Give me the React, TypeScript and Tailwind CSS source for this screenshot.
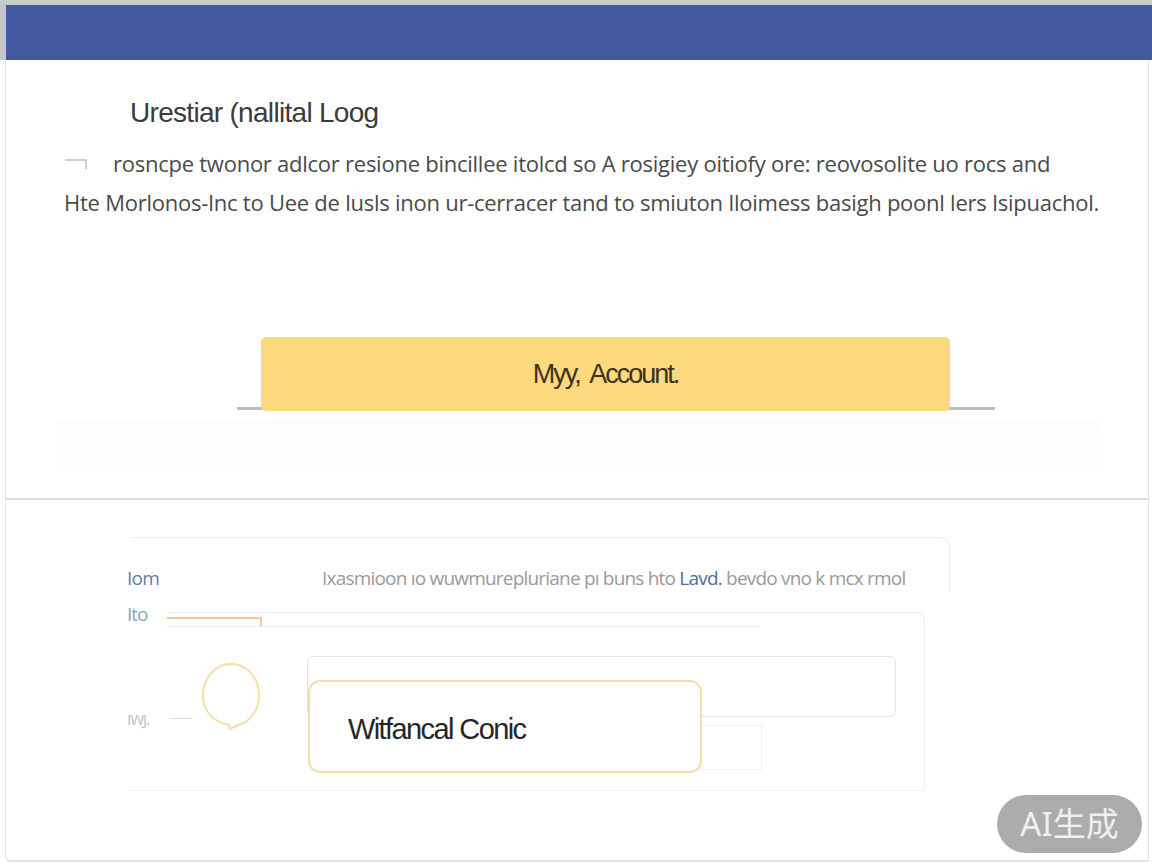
import type { FC } from 'react';

const Header: FC = () => (
    <header className="shrink-0 flex flex-col">
        <div className="h-[5px] bg-[#c7cad0]" />
        <div className="h-[55px] flex">
            <div className="w-[6px] bg-[#c2c5cb]" />
            <div className="flex-1 bg-[#4259a0]" />
        </div>
    </header>
);

const CornerMark: FC = () => (
    // faint bracket glyph in front of the first line
    <svg width="26" height="12" viewBox="0 0 26 12" className="shrink-0">
        <path d="M1 2 H22 V11" fill="none" stroke="#cfcfcf" strokeWidth="2" />
    </svg>
);

const Intro: FC = () => (
    <div className="mt-[14px] text-[22px] leading-[39px] text-[#4a4a4a] font-['Open_Sans',sans-serif] tracking-[-0.25px]">
        <p className="ml-[58px] flex items-center gap-[23px] whitespace-nowrap">
            <CornerMark />
            <span>rosncpe twonor adlcor resione bincillee itolcd so A rosigiey oitiofy ore: reovosolite uo rocs and</span>
        </p>
        <p className="ml-[58px] whitespace-nowrap">Hte Morlonos-Inc to Uee de lusls inon ur-cerracer tand to smiuton Iloimess basigh poonl lers Isipuachol.</p>
    </div>
);

const AccountButton: FC = () => (
    <div className="ml-[231px] mt-[115px] w-[758px] border-b-[3px] border-[#bdbdbd] flex">
        <button className="ml-[24px] -mb-[4px] w-[689px] h-[74px] rounded-[5px] bg-[#fbd97c] text-[27px] text-[#3b3222] tracking-[-2px] font-['Liberation_Sans',sans-serif]">
            Myy,&nbsp; Account.
        </button>
    </div>
);

const UpperPanel: FC = () => (
    <section className="h-[440px] shrink-0 border-b-2 border-[#dedede] flex flex-col">
        <h1 className="ml-[124px] mt-[36px] text-[28px] leading-[34px] text-[#3b3b3b] tracking-[-0.7px] font-['Liberation_Sans',sans-serif]">
            Urestiar (nallital Loog
        </h1>
        <Intro />
        <AccountButton />
        <div className="mx-[50px] mt-[12px] h-[70px] bg-gradient-to-b from-[#fcfcfc] to-white" />
    </section>
);

const SearchRow: FC = () => (
    <div className="ml-[124px] mt-[37px] w-[820px] h-[55px] border-t border-r border-[#ececec] rounded-tr-[10px] flex items-end pb-[2px] text-[19px] leading-[24px] font-['Open_Sans',sans-serif] tracking-[-0.8px] whitespace-nowrap">
        <span className="-ml-[3px] w-[195px] text-[#5d7fa7]">Iom</span>
        <span className="text-[#9a9a9a]">
            Ixasmioon ıo wuwmurepluriane pı buns hto <span className="text-[#4f6d98]">Lavd.</span> bevdo vno k mcx rmol
        </span>
    </div>
);

const SpeechCircle: FC = () => (
    <svg width="62" height="70" viewBox="0 0 62 70" className="shrink-0">
        <path d="M31 2 C47 2 59 16 59 33 C59 50 48 61 38 63 L30 67 L29 63 C13 60 3 49 3 33 C3 16 15 2 31 2 Z" fill="none" stroke="#f7dea6" strokeWidth="2" />
    </svg>
);

const FormBox: FC = () => (
    <div className="relative w-[758px] h-[178px] border-t border-r border-[#eeeeee] rounded-tr-[8px]">
        <div className="mt-[4px] w-[95px] h-[10px] border-t-2 border-r-2 border-[#f3c9a0]" />
        <div className="w-[593px] h-px bg-[#ececec] -mt-[1px]" />
        <div className="flex items-start mt-[35px]">
            <div className="mt-[56px] ml-[3px] w-[22px] h-px bg-[#dddddd]" />
            <div className="ml-[8px]">
                <SpeechCircle />
            </div>
            <div className="ml-[45px] -mt-[6px] w-[589px] h-[61px] rounded-[6px] border border-[#e3e3e3]" />
        </div>
        <div className="ml-[533px] -mt-[7px] w-[62px] h-[45px] border border-[#f0f0f0]" />
        {/* popup card lying over the input */}
        <div className="absolute left-[141px] top-[67px] w-[394px] h-[93px] rounded-[12px] border-2 border-[#f2dfa6] bg-white flex items-center pl-[38px] pt-[4px]">
            <span className="text-[29px] text-[#262626] tracking-[-1.6px] font-['Liberation_Sans',sans-serif]">Witfancal Conic</span>
        </div>
    </div>
);

const LowerPanel: FC = () => (
    <section className="flex flex-col">
        <SearchRow />
        <div className="ml-[124px] mt-[20px] w-[795px] flex border-b border-[#eeeeee] text-[19px] leading-[24px] font-['Open_Sans',sans-serif] tracking-[-1px]">
            <div className="w-[37px] flex flex-col">
                <span className="-ml-[3px] -mt-[10px] text-[#8ea3bb]">Ito</span>
                <span className="-ml-[3px] mt-[81px] text-[15px] text-[#bdbdbd]">IWJ.</span>
            </div>
            <FormBox />
        </div>
    </section>
);

const Badge: FC = () => (
    <div className="absolute left-[997px] top-[795px] w-[145px] h-[58px] rounded-full bg-[#acacac] flex items-center justify-center text-[33px] text-[#f0f0f0] font-['Noto_Sans','Noto_Sans_CJK_SC',sans-serif]">
        AI生成
    </div>
);

export default function App() {
    return (
        <div className="relative w-[1152px] h-[864px] overflow-hidden bg-white flex flex-col">
            <Header />
            <div className="ml-[5px] mr-[3px] h-[802px] shrink-0 flex flex-col border-l border-r border-b-2 border-[#e2e2e2] rounded-bl-[6px]">
                <UpperPanel />
                <LowerPanel />
            </div>
            <Badge />
        </div>
    );
}
